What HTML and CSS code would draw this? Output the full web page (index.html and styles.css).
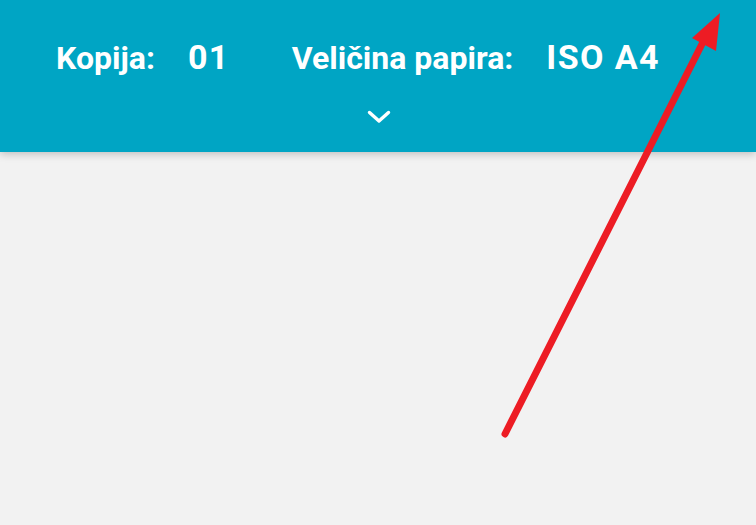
FILE: index.html
```html
<!DOCTYPE html>
<html lang="hr">
<head>
<meta charset="utf-8">
<link rel="stylesheet" href="styles.css">
</head>
<body>
<header class="bar">
  <div class="row">
    <span class="label">Kopija:</span>
    <span class="value">01</span>
    <span class="label second">Veličina papira:</span>
    <span class="value">ISO A4</span>
  </div>
  <div class="chev">
    <svg width="24" height="16" viewBox="0 0 24 16"><path d="M2.5 3.5 L12 12 L21.5 3.5" fill="none" stroke="#fff" stroke-width="3.4" stroke-linecap="round" stroke-linejoin="round"/></svg>
  </div>
</header>
<main class="content"></main>
<svg class="arrow" width="756" height="525" viewBox="0 0 756 525">
  <line x1="505" y1="434" x2="703" y2="42" stroke="#ed1c24" stroke-width="7" stroke-linecap="round"/>
  <polygon points="720,13 692,38 716,51" fill="#ed1c24"/>
</svg>
</body>
</html>
```
FILE: styles.css
```css
html, body {
  margin: 0;
  padding: 0;
  height: 100%;
  background: #f2f2f2;
  overflow: hidden;
}
body {
  font-family: Roboto, "Liberation Sans", sans-serif;
  position: relative;
}
.bar {
  height: 152px;
  background: #00a5c4;
  box-shadow: 0 2px 8px rgba(0,0,0,0.22);
  box-sizing: border-box;
  padding-top: 35px;
  position: relative;
  z-index: 1;
}
.row {
  display: flex;
  align-items: baseline;
  padding-left: 56px;
  color: #fff;
  font-weight: 700;
  line-height: 44px;
}
.label {
  font-size: 32px;
  letter-spacing: 0px;
}
.value {
  font-size: 34px;
  letter-spacing: 1.4px;
  margin-left: 33px;
}
.second {
  margin-left: 62px;
}
.chev {
  display: flex;
  justify-content: center;
  padding-left: 2px;
  margin-top: 29px;
}
.chev svg {
  display: block;
}
.arrow {
  position: absolute;
  left: 0;
  top: 0;
  z-index: 2;
  pointer-events: none;
}
```
